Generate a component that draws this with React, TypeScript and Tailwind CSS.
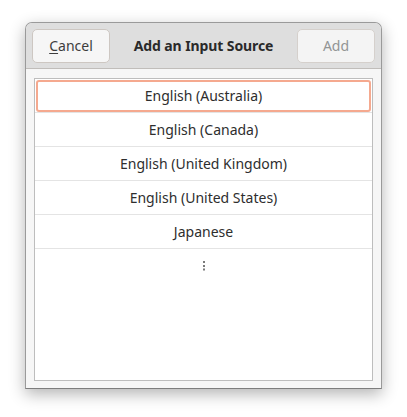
import React from "react";

const items = [
  "English (Australia)",
  "English (Canada)",
  "English (United Kingdom)",
  "English (United States)",
  "Japanese",
];

export default function App() {
  return (
    <div
      className="w-[407px] h-[417px] bg-white pt-[22px] pl-[25px]"
      style={{ fontFamily: '"Noto Sans", "Open Sans", sans-serif' }}
    >
      <div className="w-[357px] h-[367px] flex flex-col rounded-t-[7px] border border-[#9a9a9a] border-b-[#7d7d7d] bg-[#f6f6f6] shadow-[0_5px_16px_rgba(0,0,0,0.3)] overflow-hidden">
        <div className="h-[46px] shrink-0 flex items-center justify-between px-[6px] bg-[#dedede] border-b border-[#c0bdba]">
          <button className="w-[78px] h-[34px] rounded-[5px] border border-[#cdc7c2] bg-[#f6f6f6] text-[14px] text-[#3d3d3d]">
            <span className="underline underline-offset-[2px] decoration-1">C</span>ancel
          </button>
          <div className="text-[14px] font-bold text-[#2a2a2a] tracking-[-0.1px]">Add an Input Source</div>
          <button className="w-[78px] h-[34px] rounded-[5px] border border-[#d5d0cc] bg-[#f4f4f4] text-[14px] text-[#929595]">
            Add
          </button>
        </div>
        <div className="flex-1 px-[8px] pt-[9px] pb-[7px] flex">
          <div className="flex-1 bg-white border border-[#bdbdbd] flex flex-col">
            {items.map((t, i) => (
              <div
                key={t}
                className="h-[34px] shrink-0 border-b border-[#e4e4e4] relative flex items-center justify-center text-[14px] text-[#2e2e2e]"
              >
                {i === 0 && (
                  <div className="absolute left-[1px] right-[1px] top-[1px] bottom-[0px] rounded-[3px] border-2 border-[#f5a98f]" />
                )}
                <span className="relative">{t}</span>
              </div>
            ))}
            <div className="h-[34px] shrink-0 flex items-center justify-center">
              <svg width="4" height="12" viewBox="0 0 4 12">
                <rect x="1" y="1" width="2" height="2" fill="#7a7a7a" />
                <rect x="1" y="5" width="2" height="2" fill="#7a7a7a" />
                <rect x="1" y="8.5" width="2" height="2" fill="#7a7a7a" />
              </svg>
            </div>
          </div>
        </div>
      </div>
    </div>
  );
}
